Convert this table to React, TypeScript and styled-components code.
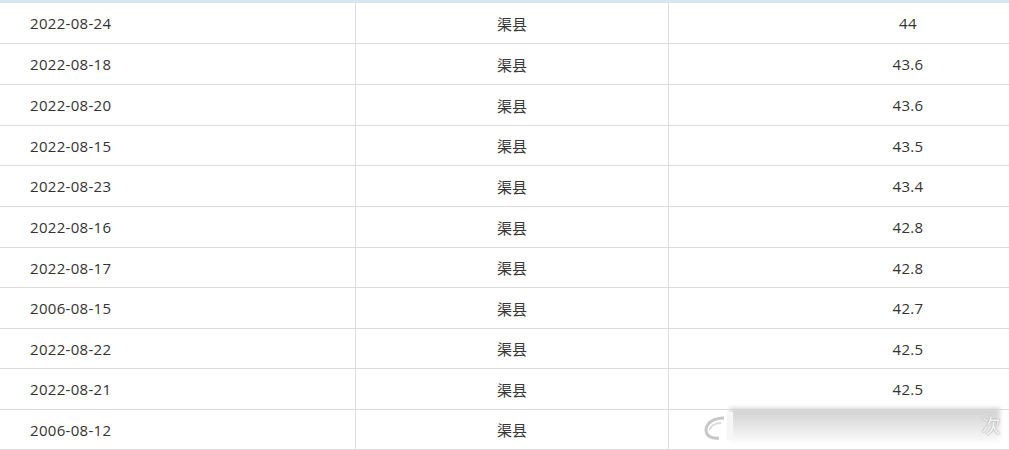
import React from "react";
import styled, { createGlobalStyle } from "styled-components";

const Global = createGlobalStyle`
  html, body { margin: 0; padding: 0; background: #fff; overflow: hidden; }
  body { width: 1009px; height: 450px; }
`;

const Page = styled.div`
  position: relative;
  width: 1009px;
  height: 450px;
  overflow: hidden;
  font-family: "Open Sans", "Noto Sans CJK SC", sans-serif;
  font-size: 15px;
  letter-spacing: 0.3px;
  color: #333;
`;

const HeaderEdge = styled.div`
  height: 3px;
  width: 1147px;
  background: #d6e8ef;
`;

const Table = styled.div`
  width: 1147px;
  display: flex;
  flex-direction: column;
`;

const Row = styled.div<{ $h: number }>`
  display: grid;
  grid-template-columns: 356px 313px 478px;
  height: ${(p) => p.$h}px;
  box-sizing: border-box;
  border-bottom: 1px solid #dcdcdc;
`;

const Cell = styled.div<{ $align: "left" | "center"; $divider?: boolean }>`
  display: flex;
  align-items: center;
  justify-content: ${(p) => (p.$align === "left" ? "flex-start" : "center")};
  padding-left: ${(p) => (p.$align === "left" ? "30px" : "0")};
  border-right: ${(p) => (p.$divider ? "1px solid #dcdcdc" : "none")};
  box-sizing: border-box;
  white-space: nowrap;
`;

const CjkText = styled.span`
  font-family: "Noto Sans CJK SC", sans-serif;
  font-size: 15px;
  letter-spacing: 0;
  color: #383838;
`;

const Watermark = styled.div`
  position: absolute;
  left: 700px;
  top: 405px;
  width: 309px;
  height: 38px;
`;

const WmBar = styled.div`
  position: absolute;
  left: 30px;
  top: 3px;
  width: 270px;
  height: 33px;
  background: linear-gradient(#cfcfcf, #e0e0e0 40%, #efefef 75%, #f8f8f8);
  filter: blur(2px);
`;

const WmChar = styled.span`
  position: absolute;
  right: 8px;
  top: 6px;
  font-family: "Noto Sans CJK SC", sans-serif;
  font-size: 19px;
  color: #f6f6f6;
  text-shadow: 0 0 1px #999, 0 0 2px #bbb;
`;

const WmLogo = styled.svg`
  position: absolute;
  left: 2px;
  top: 4px;
`;

const rows: [string, string, number][] = [
  ["2022-08-24", "44", 41],
  ["2022-08-18", "43.6", 41],
  ["2022-08-20", "43.6", 41],
  ["2022-08-15", "43.5", 40],
  ["2022-08-23", "43.4", 41],
  ["2022-08-16", "42.8", 41],
  ["2022-08-17", "42.8", 40],
  ["2006-08-15", "42.7", 41],
  ["2022-08-22", "42.5", 40],
  ["2022-08-21", "42.5", 41],
  ["2006-08-12", "", 40],
];

export default function App() {
  return (
    <Page>
      <Global />
      <HeaderEdge />
      <Table>
        {rows.map(([d, v, h], i) => (
          <Row key={i} $h={h}>
            <Cell $align="left" $divider>{d}</Cell>
            <Cell $align="center" $divider>
              <CjkText>渠县</CjkText>
            </Cell>
            <Cell $align="center">{v}</Cell>
          </Row>
        ))}
      </Table>
      <Watermark>
        <WmBar />
        <WmLogo width="36" height="34" viewBox="0 0 36 34">
          <path d="M22 9 C12 9 4 14 4 21 C4 27 10 30 17 29" fill="none" stroke="#c8c8c8" strokeWidth="3" />
          <path d="M8 21 C8 17 13 14 19 14" fill="none" stroke="#dcdcdc" strokeWidth="2" />
          <path d="M28 3 L28 31" stroke="#f6f6f6" strokeWidth="6" />
        </WmLogo>
        <WmChar>次</WmChar>
      </Watermark>
    </Page>
  );
}
